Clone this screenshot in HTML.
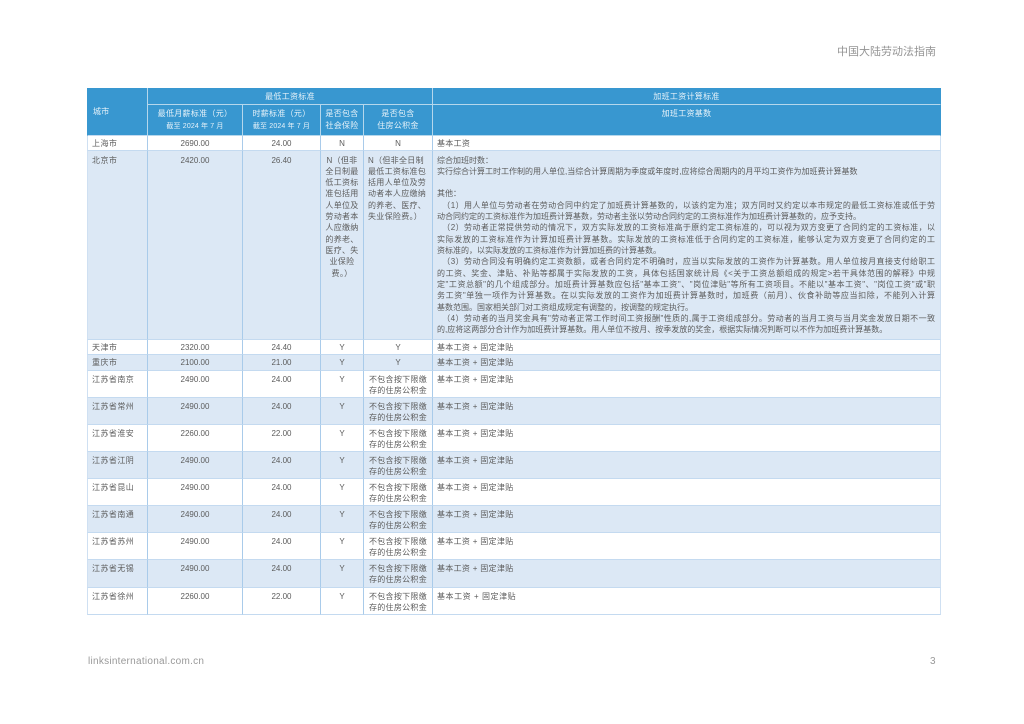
<!DOCTYPE html>
<html lang="zh-CN">
<head>
<meta charset="utf-8">
<title>中国大陆劳动法指南</title>
<style>
html,body{margin:0;padding:0;background:#fff;}
body{width:1024px;height:724px;position:relative;overflow:hidden;font-family:"Liberation Sans","Noto Sans CJK SC",sans-serif;color:#5c5c5c;}
.title{position:absolute;top:45px;right:88px;font-size:11px;line-height:14px;color:#949494;white-space:nowrap;}
.site{position:absolute;left:88px;top:655px;font-size:10px;line-height:13px;letter-spacing:.27px;color:#999;white-space:nowrap;}
.page{position:absolute;left:930px;top:655px;font-size:10px;line-height:13px;color:#999;}
table{position:absolute;left:87px;top:88px;width:854px;border-collapse:separate;border-spacing:0;table-layout:fixed;font-size:8px;line-height:11.33px;}
td,th{box-sizing:border-box;padding:0;vertical-align:top;text-align:center;font-weight:normal;border-left:1px solid #a9cbea;border-bottom:1px solid #c4daf0;overflow:hidden;}
td:first-child{border-left:1px solid #cfe0f2;text-align:left;padding-left:4px;letter-spacing:.45px;}
td:last-child,th:last-child{border-right:1px solid #cfe0f2;}
td:last-child{text-align:left;padding-left:4px;}
th{background:#3897d0;color:#e6f2f9;border-left:1px solid #b5d7ec;border-bottom:1px solid #b5d7ec;letter-spacing:.3px;}
th.city{border-left:1px solid #3897d0;border-bottom:1px solid #c4daf0;text-align:left;padding:18px 0 0 5px;}
th:last-child{border-right:1px solid #3897d0;}
.h1 th{padding-top:2.5px;}
.h1 th.city{padding-top:18px;}
.h2 th{padding-top:2.5px;line-height:12px;}
.h2 small{font-size:7px;letter-spacing:.15px;}
.b{background:#dce8f5;}
.r1 td{padding-top:2px;}
.r2 td{padding-top:2.5px;line-height:11.7px;}
.cn{letter-spacing:.3px;}
.left{text-align:left!important;padding-left:4px;}
.top{padding-top:3.5px!important;}
.j{display:block;width:498px;text-align:justify;text-align-last:justify;white-space:nowrap;}
.n{display:block;white-space:nowrap;}
</style>
</head>
<body>
<div class="title">中国大陆劳动法指南</div>
<table>
<colgroup><col style="width:60px"><col style="width:95px"><col style="width:78px"><col style="width:43px"><col style="width:69px"><col style="width:509px"></colgroup>
<tr class="h1" style="height:17px"><th class="city" rowspan="2">城市</th><th colspan="4">最低工资标准</th><th>加班工资计算标准</th></tr>
<tr class="h2" style="height:31px"><th>最低月薪标准（元）<br><small>截至 2024 年 7 月</small></th><th>时薪标准（元）<br><small>截至 2024 年 7 月</small></th><th>是否包含<br>社会保险</th><th>是否包含<br>住房公积金</th><th>加班工资基数</th></tr>
<tr class="r1" style="height:15px"><td>上海市</td><td>2690.00</td><td>24.00</td><td>N</td><td>N</td><td class="cn">基本工资</td></tr>
<tr class="b" style="height:189px">
<td class="top">北京市</td><td class="top">2420.00</td><td class="top">26.40</td>
<td class="cn top">N（但非<br>全日制最<br>低工资标<br>准包括用<br>人单位及<br>劳动者本<br>人应缴纳<br>的养老、<br>医疗、失<br>业保险<br>费。）</td>
<td class="cn left top">N（但非全日制<br>最低工资标准包<br>括用人单位及劳<br>动者本人应缴纳<br>的养老、医疗、<br>失业保险费。）</td>
<td class="top">
<span class="n">综合加班时数：</span>
<span class="n">实行综合计算工时工作制的用人单位,当综合计算周期为季度或年度时,应将综合周期内的月平均工资作为加班费计算基数</span>
<span class="n">&nbsp;</span>
<span class="n">其他：</span>
<span class="j">&nbsp;&nbsp;（1）用人单位与劳动者在劳动合同中约定了加班费计算基数的，以该约定为准；双方同时又约定以本市规定的最低工资标准或低于劳</span>
<span class="n">动合同约定的工资标准作为加班费计算基数，劳动者主张以劳动合同约定的工资标准作为加班费计算基数的，应予支持。</span>
<span class="j">&nbsp;&nbsp;（2）劳动者正常提供劳动的情况下，双方实际发放的工资标准高于原约定工资标准的，可以视为双方变更了合同约定的工资标准，以</span>
<span class="j">实际发放的工资标准作为计算加班费计算基数。实际发放的工资标准低于合同约定的工资标准，能够认定为双方变更了合同约定的工</span>
<span class="n">资标准的，以实际发放的工资标准作为计算加班费的计算基数。</span>
<span class="j">&nbsp;&nbsp;（3）劳动合同没有明确约定工资数额，或者合同约定不明确时，应当以实际发放的工资作为计算基数。用人单位按月直接支付给职工</span>
<span class="j">的工资、奖金、津贴、补贴等都属于实际发放的工资，具体包括国家统计局《&lt;关于工资总额组成的规定&gt;若干具体范围的解释》中规</span>
<span class="j">定"工资总额"的几个组成部分。加班费计算基数应包括"基本工资"、"岗位津贴"等所有工资项目。不能以"基本工资"、"岗位工资"或"职</span>
<span class="j">务工资"单独一项作为计算基数。在以实际发放的工资作为加班费计算基数时，加班费（前月）、伙食补助等应当扣除，不能列入计算</span>
<span class="n">基数范围。国家相关部门对工资组成规定有调整的，按调整的规定执行。</span>
<span class="j">&nbsp;&nbsp;（4）劳动者的当月奖金具有"劳动者正常工作时间工资报酬"性质的,属于工资组成部分。劳动者的当月工资与当月奖金发放日期不一致</span>
<span class="n">的,应将这两部分合计作为加班费计算基数。用人单位不按月、按季发放的奖金，根据实际情况判断可以不作为加班费计算基数。</span>
</td></tr>
<tr class="r1" style="height:15px"><td>天津市</td><td>2320.00</td><td>24.40</td><td>Y</td><td>Y</td><td class="cn">基本工资 + 固定津贴</td></tr>
<tr class="r1 b" style="height:16px"><td>重庆市</td><td>2100.00</td><td>21.00</td><td>Y</td><td>Y</td><td class="cn">基本工资 + 固定津贴</td></tr>
<tr class="r2" style="height:27px"><td>江苏省南京</td><td>2490.00</td><td>24.00</td><td>Y</td><td class="cn">不包含按下限缴<br>存的住房公积金</td><td class="cn">基本工资 + 固定津贴</td></tr>
<tr class="r2 b" style="height:27px"><td>江苏省常州</td><td>2490.00</td><td>24.00</td><td>Y</td><td class="cn">不包含按下限缴<br>存的住房公积金</td><td class="cn">基本工资 + 固定津贴</td></tr>
<tr class="r2" style="height:27px"><td>江苏省淮安</td><td>2260.00</td><td>22.00</td><td>Y</td><td class="cn">不包含按下限缴<br>存的住房公积金</td><td class="cn">基本工资 + 固定津贴</td></tr>
<tr class="r2 b" style="height:27px"><td>江苏省江阴</td><td>2490.00</td><td>24.00</td><td>Y</td><td class="cn">不包含按下限缴<br>存的住房公积金</td><td class="cn">基本工资 + 固定津贴</td></tr>
<tr class="r2" style="height:27px"><td>江苏省昆山</td><td>2490.00</td><td>24.00</td><td>Y</td><td class="cn">不包含按下限缴<br>存的住房公积金</td><td class="cn">基本工资 + 固定津贴</td></tr>
<tr class="r2 b" style="height:27px"><td>江苏省南通</td><td>2490.00</td><td>24.00</td><td>Y</td><td class="cn">不包含按下限缴<br>存的住房公积金</td><td class="cn">基本工资 + 固定津贴</td></tr>
<tr class="r2" style="height:27px"><td>江苏省苏州</td><td>2490.00</td><td>24.00</td><td>Y</td><td class="cn">不包含按下限缴<br>存的住房公积金</td><td class="cn">基本工资 + 固定津贴</td></tr>
<tr class="r2 b" style="height:28px"><td>江苏省无锡</td><td>2490.00</td><td>24.00</td><td>Y</td><td class="cn">不包含按下限缴<br>存的住房公积金</td><td class="cn">基本工资 + 固定津贴</td></tr>
<tr class="r2" style="height:27px"><td>江苏省徐州</td><td>2260.00</td><td>22.00</td><td>Y</td><td class="cn">不包含按下限缴<br>存的住房公积金</td><td style="letter-spacing:.55px">基本工资 + 固定津贴</td></tr>
</table>
<div class="site">linksinternational.com.cn</div>
<div class="page">3</div>
</body>
</html>
